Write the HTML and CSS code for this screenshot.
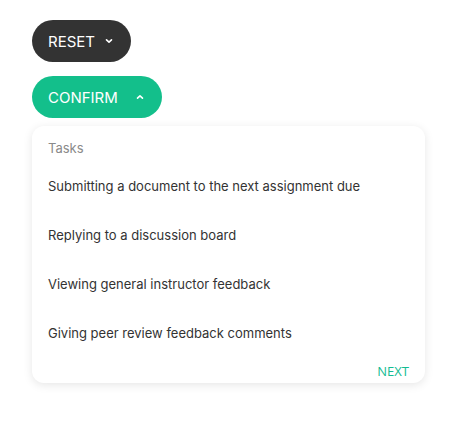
FILE: index.html
```html
<!DOCTYPE html>
<html>
<head>
<meta charset="utf-8">
<link rel="stylesheet" href="styles.css">
</head>
<body>
<div class="page">
  <button class="btn btn-dark">RESET
    <svg class="chev" viewBox="0 0 12 12" width="12" height="12"><path d="M3.5 4.8 6 7.2 8.5 4.8" fill="none" stroke="currentColor" stroke-width="1.6" stroke-linecap="round" stroke-linejoin="round"/></svg>
  </button>
  <div class="group">
    <button class="btn btn-green">CONFIRM
      <svg class="chev" viewBox="0 0 12 12" width="12" height="12"><path d="M3.5 7.2 6 4.8 8.5 7.2" fill="none" stroke="currentColor" stroke-width="1.6" stroke-linecap="round" stroke-linejoin="round"/></svg>
    </button>
    <div class="card">
      <div class="card-title">Tasks</div>
      <ul class="list">
        <li>Submitting a document to the next assignment due</li>
        <li>Replying to a discussion board</li>
        <li>Viewing general instructor feedback</li>
        <li>Giving peer review feedback comments</li>
      </ul>
      <div class="card-foot"><span class="next">NEXT</span></div>
    </div>
  </div>
</div>
</body>
</html>
```

FILE: styles.css
```css
html, body { margin: 0; padding: 0; background: #fff; }
body { font-family: Inter, "Noto Sans", sans-serif; }
.page { padding: 20px 32px; display: flex; flex-direction: column; align-items: flex-start; gap: 14px; }
.btn {
  display: inline-flex; align-items: center; gap: 8px;
  height: 42px; padding: 0 16px; border: none; border-radius: 21px;
  font-family: Inter, "Noto Sans", sans-serif; font-size: 15px; font-weight: 400;
  color: #fff; letter-spacing: 0; cursor: pointer;
}
.btn-dark { background: #333333; }
.btn-green { background: #13bf8b; gap: 16px; padding-right: 16px; }
.chev { display: block; }
.group { display: flex; flex-direction: column; align-items: flex-start; gap: 8px; }
.card {
  width: 393px; box-sizing: border-box; background: #fff; border-radius: 12px;
  box-shadow: 0 2px 10px rgba(0,0,0,0.10);
  padding: 12px 16px 2px;
}
.card-title { font-size: 13px; line-height: 20px; color: #8a8a8a; margin-bottom: 3px; }
.list { list-style: none; margin: 0; padding: 0; }
.list li { height: 49px; display: flex; align-items: center; font-size: 13px; color: #333; }
.card-foot { display: flex; justify-content: flex-end; padding: 4px 0 0; }
.next { font-family: "Open Sans", sans-serif; font-size: 13px; line-height: 20px; color: #14bc92; }
```
